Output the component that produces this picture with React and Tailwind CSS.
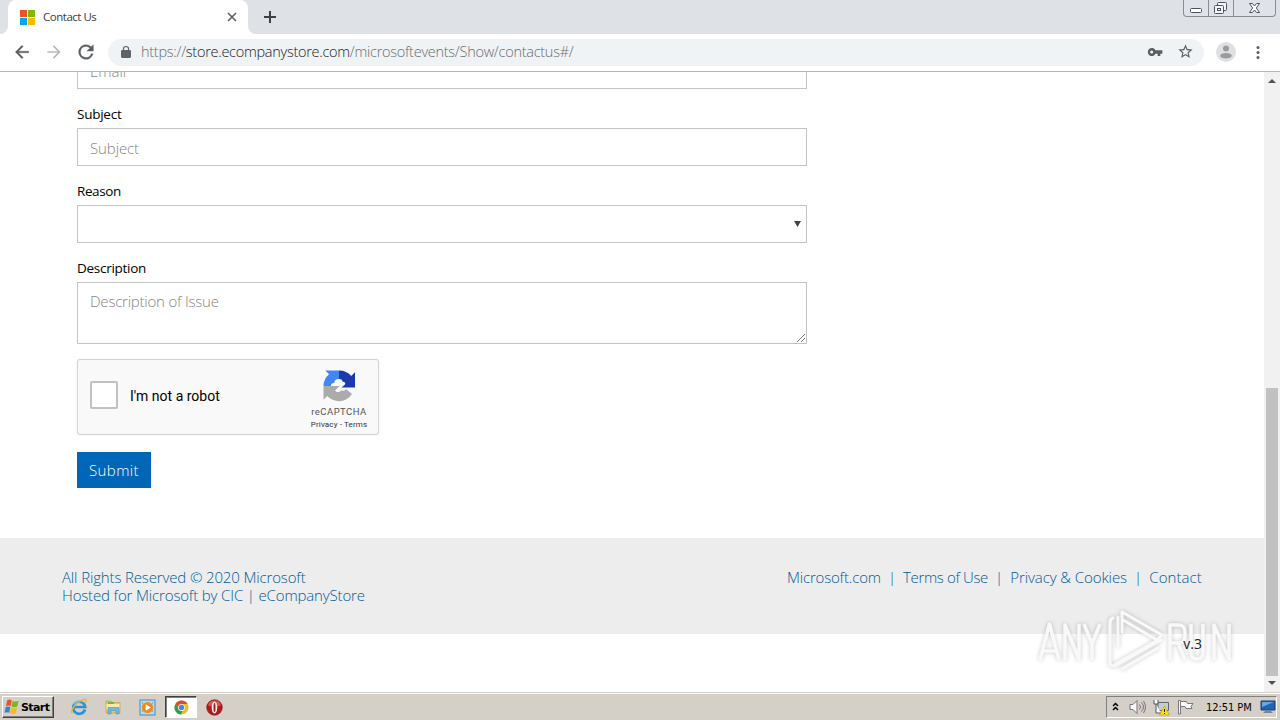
import React from "react";

const light = "font-['Open_Sans','Noto_Sans',sans-serif] font-light";
const regular = "font-['Open_Sans','Noto_Sans',sans-serif]";

function MicrosoftLogo() {
  return (
    <div className="grid h-[15px] w-[15px] grid-cols-2 grid-rows-2 gap-px">
      <i className="bg-[#f25022]" />
      <i className="bg-[#7fba00]" />
      <i className="bg-[#00a4ef]" />
      <i className="bg-[#ffb900]" />
    </div>
  );
}

function WindowButtons() {
  return (
    <div className="mr-[4px] flex h-[17px] w-[93px] rounded-b-[4px] border border-t-0 border-[#878c95] bg-[#dfe2e8]">
      <div className="w-[25px] border-r border-[#878c95]">
        <svg width="24" height="16" fill="#fff" stroke="#4d525c">
          <rect x="6.500" y="8.500" width="11" height="4" rx="1" />
        </svg>
      </div>
      <div className="w-[25px] border-r border-[#878c95]">
        <svg width="24" height="16" fill="#f4f5f7" stroke="#4d525c">
          <rect x="8.500" y="2.500" width="9" height="8" rx="1" />
          <rect x="5.500" y="5.500" width="9" height="8" rx="1" />
          <rect x="8.500" y="8.500" width="3" height="2" />
        </svg>
      </div>
      <svg width="41" height="16" fill="#fff" stroke="#4d525c" strokeWidth="1">
        <path d="M15.500 3.500h3l2 2.500 2-2.500h3l-3.200 4.500 3.200 4.500h-3l-2-2.500-2 2.500h-3l3.200-4.500z" />
      </svg>
    </div>
  );
}

function TabStrip() {
  return (
    <header className="flex h-[34px] items-start justify-between bg-[#dee1e6]">
      <div className="flex h-full items-end">
        <svg width="8" height="8" className="fill-white">
          <path d="M8 0v8H0a8 8 0 0 0 8-8" />
        </svg>
        <div className="flex h-full w-[240px] items-center rounded-t-[8px] bg-white pl-[12px] pr-[11px]">
          <MicrosoftLogo />
          <span className={`${regular} ml-[8px] flex-1 text-[11.500px] leading-none tracking-[-0.480px] text-[#3c4043]`}>
            Contact Us
          </span>
          <svg width="10" height="10" stroke="#5f6368" strokeWidth="1.700">
            <path d="M1 1l8 8M9 1l-8 8" />
          </svg>
        </div>
        <svg width="8" height="8" className="fill-white">
          <path d="M0 0v8h8a8 8 0 0 1-8-8" />
        </svg>
        <svg width="12" height="12" className="mb-[11px] ml-[8px]" stroke="#3c4043" strokeWidth="2">
          <path d="M6 0v12M0 6h12" />
        </svg>
      </div>
      <WindowButtons />
    </header>
  );
}

function Toolbar() {
  return (
    <div className="flex h-[38px] items-center border-b border-[#b4b6b6] bg-white pl-[12px] pr-[11px]">
      <svg width="20" height="20" viewBox="0 0 24 24" className="relative -top-px" fill="#5a5d61" stroke="#5a5d61" strokeWidth=".4">
        <path d="M20 11H7.830l5.590-5.590L12 4l-8 8 8 8 1.410-1.410L7.830 13H20z" />
      </svg>
      <svg width="20" height="20" viewBox="0 0 24 24" className="relative -top-px ml-[12px]" fill="#b8babd">
        <path d="M12 4l-1.410 1.410L16.170 11H4v2h12.170l-5.580 5.590L12 20l8-8z" />
      </svg>
      <svg width="22" height="22" viewBox="0 0 24 24" className="relative -top-px ml-[11px]" fill="#5a5d61" stroke="#5a5d61" strokeWidth=".4">
        <path d="M17.650 6.350A7.960 7.960 0 0 0 12 4a8 8 0 1 0 7.730 10h-2.080A6 6 0 1 1 12 6c1.660 0 3.140.69 4.220 1.780L13 11h7V4z" />
      </svg>
      <div className="ml-[11px] flex h-[27px] flex-1 items-center rounded-full bg-[#f0f3f5] pl-[13px] pr-[10px]">
        <svg width="10" height="12" viewBox="4 1 16 21" className="relative -top-px" preserveAspectRatio="none" fill="#5f6368">
          <path d="M18 8h-1V6A5 5 0 0 0 7 6v2H6a2 2 0 0 0-2 2v10c0 1.100.9 2 2 2h12a2 2 0 0 0 2-2V10a2 2 0 0 0-2-2M8.900 8V6a3.100 3.100 0 0 1 6.200 0v2z" />
        </svg>
        <span className={`${light} ml-[10px] flex-1 whitespace-nowrap text-[14.500px] leading-none tracking-[-0.270px] text-[#686c70]`}>
          https://<span className="text-[#202124]">store.ecompanystore.com</span>/microsoftevents/Show/contactus#/
        </span>
        <svg width="16" height="16" viewBox="0 0 24 24" className="relative -top-px fill-[#5a5d61]">
          <path fillRule="evenodd" d="M12.650 9.500A6 6 0 1 0 12.650 14.500H16V18h4v-3.500h3v-5zM7 14.300a2.300 2.300 0 1 1 0-4.600 2.300 2.300 0 0 1 0 4.600" />
        </svg>
        <svg width="17" height="17" viewBox="0 0 24 24" className="relative -top-px ml-[14px] fill-[#5a5d61]">
          <path d="m22 9.240-7.190-.62L12 2 9.190 8.630 2 9.240l5.460 4.730L5.820 21 12 17.270 18.180 21l-1.630-7.030zM12 15.400l-3.760 2.270 1-4.280-3.320-2.880 4.380-.38L12 6.100l1.710 4.040 4.380.38-3.320 2.880 1 4.280z" />
        </svg>
      </div>
      <svg width="20" height="20" className="relative -top-px ml-[12px]">
        <circle cx="10" cy="10" r="10" fill="#dfe0e1" />
        <circle cx="10" cy="6.500" r="3" fill="#999b9d" />
        <ellipse cx="10" cy="13.700" rx="5.800" ry="2.800" fill="#999b9d" />
      </svg>
      <svg width="4" height="16" className="ml-[20px] mr-[9px]" fill="#5a5d61">
        <circle cx="2" cy="2.500" r="1.500" />
        <circle cx="2" cy="7.500" r="1.500" />
        <circle cx="2" cy="12.500" r="1.500" />
      </svg>
    </div>
  );
}

function Label({ children, className }) {
  return (
    <div className={`${regular} mb-[4px] mt-[15px] h-[20px] text-[13.500px] leading-[20px] text-black ${className}`}>
      {children}
    </div>
  );
}

function Recaptcha() {
  return (
    <div className="mt-[15px] flex h-[76px] w-[302px] rounded-[3px] border border-[#d3d3d3] bg-[#f9f9f9] pl-[12px] shadow-[0_0_2px_rgba(0,0,0,0.08)]">
      <div className="mt-[21px] h-[28px] w-[28px] rounded-[2px] border-2 border-[#c1c1c1] bg-white" />
      <span className="ml-[12px] mt-[27px] flex-1 font-['Roboto',sans-serif] text-[14px] leading-[18px] tracking-[0px] text-black">
        I'm not a robot
      </span>
      <div className="mr-[10px] flex w-[58px] flex-col items-center whitespace-nowrap font-['Roboto',sans-serif] text-[#555]">
        <svg width="32" height="32" viewBox="0 0 64 64" className="mt-[10px]">
          <path fill="#1c3aa9" d="M64 35V4.500l-7.600 7.600A31 31 0 0 0 32 1v17q7 0 7 5 7 1 5 6l-7 6z" />
          <path fill="#4285f4" d="M32 1H4.500l7.600 7.600A31 31 0 0 0 1 32h14.500q1-7 7-6 0-8 9.500-8z" />
          <path fill="#ababab" d="M1 32v27.500l7.600-7.600A31 31 0 0 0 58 48L46 38q-2 5-9 3-8 7-13 0L33 32z" />
        </svg>
        <span className="mt-[5px] text-[9.500px] leading-[10px] tracking-[0.470px]">reCAPTCHA</span>
        <span className="mt-[3px] text-[8px] leading-[10px] tracking-[0.140px] text-[#333]">Privacy - Terms</span>
      </div>
    </div>
  );
}

function ContactForm() {
  return (
    <form className="-mt-[21px] ml-[77px] w-[730px]">
      <div className={`${light} h-[38px] border border-[#c4c4c4] pl-[12px] text-[15px] leading-[39px] text-[#858585]`}>Email</div>
      <Label className="tracking-[-0.250px]">Subject</Label>
      <div className={`${light} h-[38px] border border-[#c4c4c4] pl-[12px] text-[15px] leading-[39px] tracking-[-0.100px] text-[#858585]`}>Subject</div>
      <Label className="tracking-[-0.400px]">Reason</Label>
      <div className="flex h-[38px] items-center justify-end border border-[#c4c4c4] pb-px pr-[5px]">
        <svg width="7" height="7" fill="#444"><path d="M0 1h7L3.500 7z" /></svg>
      </div>
      <Label className="tracking-[-0.270px]">Description</Label>
      <div className="flex h-[62px] items-end justify-between border border-[#c4c4c4] pl-[12px]">
        <span className={`${light} self-start pt-[8px] text-[15px] leading-[20px] tracking-[-0.220px] text-[#858585]`}>Description of Issue</span>
        <svg width="10" height="10" stroke="#777"><path d="M1 9l8-8M5 9l4-4" /></svg>
      </div>
      <Recaptcha />
      <button type="button" className={`${light} mt-[17px] block h-[36px] w-[74px] bg-[#0067b8] text-[15px] leading-[36px] tracking-[0.400px] text-white`}>
        Submit
      </button>
    </form>
  );
}

function Watermark() {
  return (
    <svg width="204" height="70" className="absolute left-[1034px] top-[535px] [filter:drop-shadow(0_0_2px_rgba(0,0,0,0.22))]" fill="none" stroke="#f9f9f9" strokeWidth="3.500" strokeLinejoin="round">
      <path d="M6 53L15.500 17L25 53M8.500 44h14M31 53V18l14 34V17M50 17l8 20 8-20M58 37v16" />
      <path d="M79 11q-3 1-3 5v42l5 1 46-26M84 10v29M88 25V5l40 23-5 5-34-20M80 58l42-24M88 62l36-21" strokeWidth="3" strokeLinecap="round" />
      <path d="M136 53V18h8q7 0 7 7v4q0 7-7 7h-8M144 36l7 17M157 17v28q0 7 6 7t6-7V17M180 53V18l15 34V17" />
    </svg>
  );
}

function Footer() {
  return (
    <>
      <footer className={`${light} mt-[50px] flex h-[96px] justify-between bg-[#ededed] px-[62px] pt-[30px] text-[15px] leading-[18px] text-[#005a9a]`}>
        <div>
          <p className="tracking-[-0.140px]">All Rights Reserved © 2020 Microsoft</p>
          <p className="tracking-[-0.150px]">Hosted for Microsoft by CIC | eCompanyStore</p>
        </div>
        <nav className="flex w-[415px] justify-between whitespace-nowrap">
          <a className="tracking-[-0.180px]">Microsoft.com</a>
          <span>|</span>
          <a className="tracking-[-0.370px]">Terms of Use</a>
          <span>|</span>
          <a className="tracking-[-0.080px]">Privacy &amp; Cookies</a>
          <span>|</span>
          <a className="tracking-[0.080px]">Contact</a>
        </nav>
      </footer>
      <p className={`${regular} relative z-10 pr-[62px] text-right text-[14px] leading-[20px] text-[#222]`}>v.3</p>
    </>
  );
}

function Scrollbar() {
  return (
    <div className="flex w-[16px] shrink-0 flex-col items-center bg-[#f1f1f1] pb-[7px] pt-[7px]">
      <svg width="8" height="4" fill="#505050"><path d="M0 4l4-4 4 4z" /></svg>
      <div className="mt-auto h-[288px] w-[12px] bg-[#c1c1c1]" />
      <svg width="8" height="4" className="mt-[5px] shrink-0" fill="#505050"><path d="M0 0l4 4 4-4z" /></svg>
    </div>
  );
}

function Taskbar() {
  return (
    <div className="flex h-[28px] items-center border-t border-[#d4d0c8] bg-[#d4d0c8] pl-[2px] pr-[3px] pt-px shadow-[inset_0_1px_0_#fff]">
      <div className="flex h-[22px] w-[52px] items-center border border-b-[#404040] border-l-white border-r-[#404040] border-t-white pl-px shadow-[inset_-1px_-1px_0_#808080]">
        <svg width="16" height="16" viewBox="0 0 16 16">
          <path fill="#e4572a" d="M3.200 1.200c2-1 3.300-.6 4.600.2L6.600 7.200C5 6.300 3.800 6.200 2 7z" />
          <path fill="#76b52c" d="M8.600 1.900c2 1 3.800.9 6-.2L13.300 7.500c-2 1-3.900 1-5.900 0z" />
          <path fill="#3286d2" d="M1.700 8c1.800-.8 3.200-.7 4.700.2l-1.200 5.600C3.800 13 2.300 12.900.4 13.700z" />
          <path fill="#f7b923" d="M7.200 8.500c2 1 3.800 1 5.800.1l-1.200 5.600c-2 1-3.900.9-5.800-.1z" />
        </svg>
        <span className="ml-px font-['DejaVu_Sans',sans-serif] text-[11px] font-bold leading-none tracking-[-0.600px] text-black">Start</span>
      </div>
      <svg width="18" height="18" viewBox="0 0 18 18" className="ml-[16px]" fill="none">
        <path d="M15 11.500A6 6 0 1 1 15.200 9H4" stroke="#2e91d8" strokeWidth="2.700" />
        <path d="M13.300 4A6 6 0 0 0 4 6.500" stroke="#76c6f3" strokeWidth="1.300" />
        <path d="M2.500 15.500C-.5 14 4.500 6 10 3s7-1.500 5.800 1.500" stroke="#e7b73a" strokeWidth="1.400" />
      </svg>
      <svg width="17" height="16" viewBox="0 0 17 16" className="ml-[17px]">
        <path fill="#e8c45d" stroke="#c59a3a" strokeWidth=".6" d="M1 2h5l1.500 1.500H15V14H1z" />
        <path fill="#f9e9a4" d="M1.500 5h13v6h-13z" />
        <path fill="#69b559" d="M3 3h6v2H3z" />
        <path fill="#71b8df" stroke="#4b94c0" strokeWidth=".6" d="M3 8.500h11V15h-3v-3.500H6V15H3z" />
      </svg>
      <svg width="17" height="17" viewBox="0 0 17 17" className="ml-[17px]">
        <rect x="1" y="1" width="15" height="15" fill="#b7d9ef" stroke="#4989b8" />
        <path d="M3 4h1M3 8h1M3 12h1M13 4h1M13 8h1M13 12h1" stroke="#5289b0" />
        <circle cx="8.500" cy="8.500" r="5.600" fill="#f18b16" />
        <path fill="#fff" d="M6.700 5.200l5.200 3.300-5.200 3.300z" />
      </svg>
      <div className="ml-[9px] flex h-[22px] w-[32px] items-center justify-center border border-b-white border-l-[#404040] border-r-white border-t-[#404040] bg-white shadow-[inset_1px_1px_0_#808080]">
        <svg width="15" height="15" viewBox="0 0 16 16">
          <circle cx="8" cy="8" r="7.500" fill="#e9bd2e" />
          <path fill="#d84a3a" d="M1.500 4.250a7.500 7.500 0 0 1 13 0H8A3.750 3.750 0 0 0 4.700 9.700z" />
          <path fill="#319b50" d="M1.500 4.250L4.750 9.900A3.750 3.750 0 0 0 9 11.600L7.500 15.500A7.500 7.500 0 0 1 1.500 4.250" />
          <circle cx="8" cy="8" r="3.600" fill="#fff" />
          <circle cx="8" cy="8" r="2.900" fill="#4285f4" />
        </svg>
      </div>
      <svg width="17" height="17" viewBox="0 0 17 17" className="ml-[9px]">
        <circle cx="8.500" cy="8.500" r="7.800" fill="#ad1b1d" stroke="#7c1214" strokeWidth=".6" />
        <path fill="#dc5452" d="M2 6.500a6.700 6.700 0 0 1 13 0q-6.500 2-13 0" />
        <ellipse cx="8.500" cy="8.500" rx="2.800" ry="5.900" fill="#f6eeee" />
        <ellipse cx="8.500" cy="8.500" rx="1" ry="4.600" fill="#9f1c1d" />
      </svg>
      <div className="ml-auto flex h-[22px] w-[171px] items-center border border-b-white border-l-[#808080] border-r-white border-t-[#808080] pl-[5px]">
        <svg width="7" height="9" className="relative -top-px" fill="none" stroke="#000" strokeWidth="1.500">
          <path d="M1 4l2.500-2.500L6 4M1 8l2.500-2.500L6 8" />
        </svg>
        <svg width="18" height="16" viewBox="0 0 18 16" className="ml-[10px]" fill="none" stroke="#757575">
          <path d="M1 5.500h3l4-4v13l-4-4H1z" fill="#f7f7f7" />
          <path d="M10.500 5.500q2 2.500 0 5M12.500 3.500q4 4.500 0 9M14.500 2q4 6 0 12" />
        </svg>
        <svg width="17" height="17" viewBox="0 0 17 17" className="ml-[6px]">
          <path d="M5 3.500h10.500v8H5zM7 14.500h7" fill="#c7ccd1" stroke="#62676b" />
          <path d="M1 1v4h4V1M3 5v9h5" fill="#f9f9f9" stroke="#55595c" />
          <path d="M11.500 7l5 9h-10z" fill="#f7dd30" stroke="#bda40d" strokeWidth=".7" />
          <path d="M11.500 10v3M11.500 14v1" stroke="#222" />
        </svg>
        <svg width="17" height="16" viewBox="0 0 17 16" className="ml-[7px]" stroke="#777" fill="#fafafa">
          <path d="M1.500 1.500h2V15h-2z" />
          <path d="M3.500 2.500h6l1 2H16l-2 3 1 2H9l-1-2H3.500z" />
        </svg>
        <span className="ml-[12px] whitespace-nowrap font-['DejaVu_Sans_Condensed','DejaVu_Sans',sans-serif] text-[11px] leading-none tracking-[-0.050px] text-black">12:51 PM</span>
        <svg width="16" height="14" viewBox="0 0 16 14" className="ml-auto">
          <path d="M1 1h14v9H1z" fill="#2264b4" stroke="#173d73" />
          <path d="M2 2h12L2 7z" fill="#6ba7df" />
          <path d="M5 11h6l2 2H3z" fill="#72869a" />
        </svg>
      </div>
    </div>
  );
}

export default function App() {
  return (
    <div className="flex h-[720px] w-[1280px] flex-col overflow-hidden bg-white">
      <TabStrip />
      <Toolbar />
      <main className="relative flex h-[620px] overflow-hidden">
        <div className="min-w-0 flex-1">
          <ContactForm />
          <Footer />
        </div>
        <Scrollbar />
        <Watermark />
      </main>
      <Taskbar />
    </div>
  );
}
